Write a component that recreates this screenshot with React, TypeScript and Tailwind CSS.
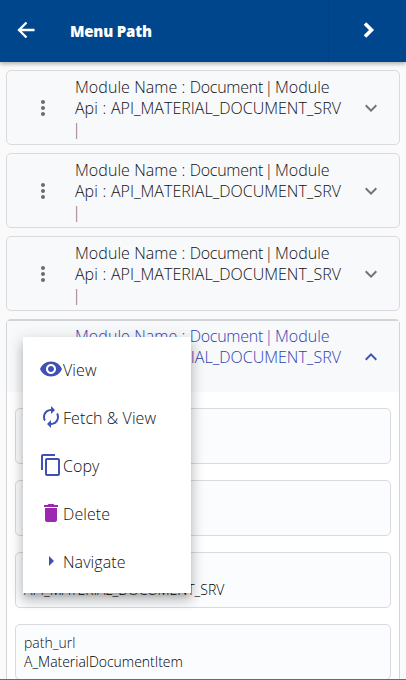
import type { ReactNode } from "react";
import {
  MdArrowRight,
  MdAutorenew,
  MdContentCopy,
  MdDelete,
  MdExpandLess,
  MdExpandMore,
  MdMoreVert,
  MdVisibility,
} from "react-icons/md";

function ModuleTitle() {
  return (
    <div className="flex-1 whitespace-nowrap pt-0.5 text-[16px] leading-[21px]">
      <div>
        <span className="tracking-[0.06px]">Module Name : </span>
        <span className="tracking-[-0.25px]">Document </span>
        <span className="-mx-[2.4px]">|</span> Module
      </div>
      <div className="tracking-[0.01px] [word-spacing:0.5px]">Api : API_MATERIAL_DOCUMENT_SRV</div>
      <div className="-ml-[2.7px] opacity-70">|</div>
    </div>
  );
}

function ModuleCard() {
  return (
    <div className="flex h-[75px] items-center rounded-[5px] border border-[#d8dadd] bg-[#f8f9fb] text-[#111]">
      <div className="flex w-[68px] justify-center pl-1">
        <MdMoreVert size={24} className="text-[#6c6c6c]" />
      </div>
      <ModuleTitle />
      <MdExpandMore size={24} className="mr-4 text-[#757575]" />
    </div>
  );
}

function Field({ label, value }: { label: string; value: string }) {
  return (
    <div className="h-14 shrink-0 whitespace-nowrap rounded-[5px] border border-[#d8dadd] bg-[#fafcfe] px-2 pt-2 text-[14px] leading-[19px]">
      <div className="h-[19px] text-[#111]">{label}</div>
      <div className="tracking-[-0.03px] text-black">{value}</div>
    </div>
  );
}

function MenuItem({ icon, label }: { icon: ReactNode; label: string }) {
  return (
    <div className="flex h-12 items-center pl-4 text-[16px] tracking-[0.08px] text-[#111]">
      <span className="-mt-0.5 text-[#3f51b5]">{icon}</span>
      <span>{label}</span>
    </div>
  );
}

export default function App() {
  return (
    <div className="relative flex h-[680px] w-[406px] flex-col overflow-hidden bg-[#fafafa] font-['Open_Sans','Noto_Sans',sans-serif] font-light">
      <header className="z-10 flex h-[62px] shrink-0 items-center bg-[#00468c] text-white shadow-[0_2px_4px_rgba(0,0,0,0.3)]">
        <svg width="24" height="24" viewBox="0 0 24 24" fill="none" className="mb-0.5 ml-3.5">
          <path d="M20.5 12H5.5M12.5 4.5 5 12l7.5 7.5" stroke="currentColor" strokeWidth="2.3" />
        </svg>
        <h1 className="ml-8 flex-1 text-[15px] font-extrabold tracking-[-0.2px]">Menu Path</h1>
        <div className="flex h-full w-[78px] items-center justify-center border-l border-[#003f82] pb-0.5">
          <svg width="12" height="18" viewBox="0 0 12 18" fill="none" className="ml-0.5">
            <path d="M2 2.5 8.5 9 2 15.5" stroke="currentColor" strokeWidth="3.6" />
          </svg>
        </div>
      </header>
      <main className="flex flex-col gap-2 px-1.5 pt-2">
        <ModuleCard />
        <ModuleCard />
        <ModuleCard />
        <section className="h-[370px] rounded-t-[5px] border border-t-2 border-[#d2d4d7] bg-white">
          <div className="flex h-[71px] items-center bg-[#f7f9fa] pl-[68px] text-[#3040b0]">
            <ModuleTitle />
            <MdExpandLess size={24} className="mr-4 text-[#3f51b5]" />
          </div>
          <div className="flex flex-col gap-4 px-2 pt-4">
            <Field label="" value="" />
            <Field label="" value="" />
            <Field label="" value="API_MATERIAL_DOCUMENT_SRV" />
            <Field label="path_url" value="A_MaterialDocumentItem" />
          </div>
        </section>
      </main>
      <div className="absolute left-[23px] top-[337px] z-20 h-[256px] w-[168px] bg-white pt-[9px] shadow-[0_5px_5px_-3px_rgba(0,0,0,0.2),0_8px_10px_1px_rgba(0,0,0,0.14),0_3px_14px_2px_rgba(0,0,0,0.12)]">
        <MenuItem icon={<MdVisibility size={24} />} label="View" />
        <MenuItem icon={<MdAutorenew size={24} />} label="Fetch &amp; View" />
        <MenuItem icon={<MdContentCopy size={24} />} label="Copy" />
        <MenuItem icon={<MdDelete size={24} className="text-[#9c27b0]" />} label="Delete" />
        <MenuItem icon={<MdArrowRight size={24} />} label="Navigate" />
      </div>
      <div className="absolute bottom-0 left-0 z-10 h-px w-full bg-[#3b78a6]" />
    </div>
  );
}
